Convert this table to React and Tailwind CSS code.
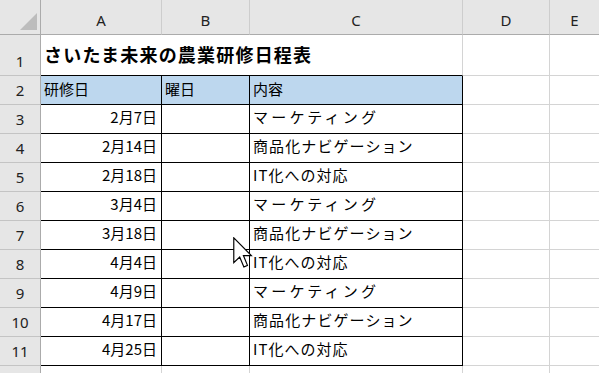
import React from "react";

const HDR = "bg-[#e6e6e6] text-[#222]";
const jp = { fontFamily: '"Noto Sans CJK JP", "Noto Sans", sans-serif' };
const lat = { fontFamily: '"Noto Sans", "Liberation Sans", sans-serif' };

const dates = ["2月7日", "2月14日", "2月18日", "3月4日", "3月18日", "4月4日", "4月9日", "4月17日", "4月25日"];
const topics = ["マーケティング", "商品化ナビゲーション", "IT化への対応"];
const topicCls = ["tracking-[3.2px]", "tracking-[1.1px]", "tracking-[1px]"];

function RowHead({ n }) {
  return (
    <div
      style={lat}
      className={`${HDR} flex items-end justify-center pb-[6px] text-[15px] leading-[15px] border-r border-r-[#ababab] border-b border-b-[#c4c4c4]`}
    >
      {n}
    </div>
  );
}

function ColHead({ l, last }) {
  return (
    <div
      style={lat}
      className={`${HDR} flex items-end justify-center pb-[6px] text-[15px] leading-[15px] border-b border-b-[#ababab] ${last ? "" : "border-r border-r-[#cdcdcd]"}`}
    >
      {l}
    </div>
  );
}

function Cursor() {
  return (
    <svg
      className="absolute left-[233px] top-[237px]"
      width="21"
      height="32"
      viewBox="0 0 13.5 20.5"
    >
      <path
        d="M0.5 0.5 L0.5 16.5 L4.3 12.8 L7 19.2 L9.3 18.2 L6.7 11.9 L11.8 11.9 Z"
        fill="#fff"
        stroke="#000"
        strokeWidth="0.75"
        strokeLinejoin="miter"
      />
    </svg>
  );
}

export default function App() {
  return (
    <div className="relative w-[599px] h-[373px] overflow-hidden bg-white text-black">
      <div className="grid grid-cols-[41px_121px_88px_213px_87px_49px] grid-rows-[35px_41px_29px_repeat(9,29px)_29px]">
        {/* column header row */}
        <div className={`${HDR} relative border-r border-r-[#ababab] border-b border-b-[#ababab]`}>
          <svg className="absolute left-0 top-0" width="40" height="34">
            <polygon points="37,13 37,30 20,30" fill="#bdbdbd" />
          </svg>
        </div>
        <ColHead l="A" />
        <ColHead l="B" />
        <ColHead l="C" />
        <ColHead l="D" />
        <ColHead l="E" last />

        {/* row 1 */}
        <RowHead n="1" />
        <div
          style={jp}
          className="col-span-3 flex items-end pl-[3px] pb-[12px] text-[18px] leading-[18px] font-bold tracking-[1.2px] whitespace-nowrap border-r border-r-[#d4d4d4] border-b border-b-black"
        >
          さいたま未来の農業研修日程表
        </div>
        <div className="border-r border-r-[#d4d4d4] border-b border-b-[#d4d4d4]" />
        <div className="border-b border-b-[#d4d4d4]" />

        {/* row 2 */}
        <RowHead n="2" />
        <div style={jp} className="bg-[#bdd7ee] flex items-end pl-[3px] pb-[8px] text-[15px] leading-[15px] border-r border-r-black border-b border-b-black">
          研修日
        </div>
        <div style={jp} className="bg-[#bdd7ee] flex items-end pl-[3px] pb-[8px] text-[15px] leading-[15px] border-r border-r-black border-b border-b-black">
          曜日
        </div>
        <div style={jp} className="bg-[#bdd7ee] flex items-end pl-[3px] pb-[8px] text-[15px] leading-[15px] border-r border-r-black border-b border-b-black">
          内容
        </div>
        <div className="border-r border-r-[#d4d4d4] border-b border-b-[#d4d4d4]" />
        <div className="border-b border-b-[#d4d4d4]" />

        {/* data rows */}
        {dates.map((d, i) => (
          <React.Fragment key={d}>
            <RowHead n={String(i + 3)} />
            <div style={jp} className="flex items-end justify-end pr-[4px] pb-[9px] text-[15px] leading-[15px] border-r border-r-black border-b border-b-black">
              {d}
            </div>
            <div className="border-r border-r-black border-b border-b-black" />
            <div
              style={jp}
              className={`flex items-end pl-[3px] pb-[9px] text-[15px] leading-[15px] whitespace-nowrap border-r border-r-black border-b border-b-black ${topicCls[i % 3]}`}
            >
              {topics[i % 3]}
            </div>
            <div className="border-r border-r-[#d4d4d4] border-b border-b-[#d4d4d4]" />
            <div className="border-b border-b-[#d4d4d4]" />
          </React.Fragment>
        ))}

        {/* row 12 (partially visible) */}
        <RowHead n="12" />
        <div className="border-r border-r-[#d4d4d4] border-b border-b-[#d4d4d4]" />
        <div className="border-r border-r-[#d4d4d4] border-b border-b-[#d4d4d4]" />
        <div className="border-r border-r-[#d4d4d4] border-b border-b-[#d4d4d4]" />
        <div className="border-r border-r-[#d4d4d4] border-b border-b-[#d4d4d4]" />
        <div className="border-b border-b-[#d4d4d4]" />
      </div>
      <Cursor />
    </div>
  );
}
